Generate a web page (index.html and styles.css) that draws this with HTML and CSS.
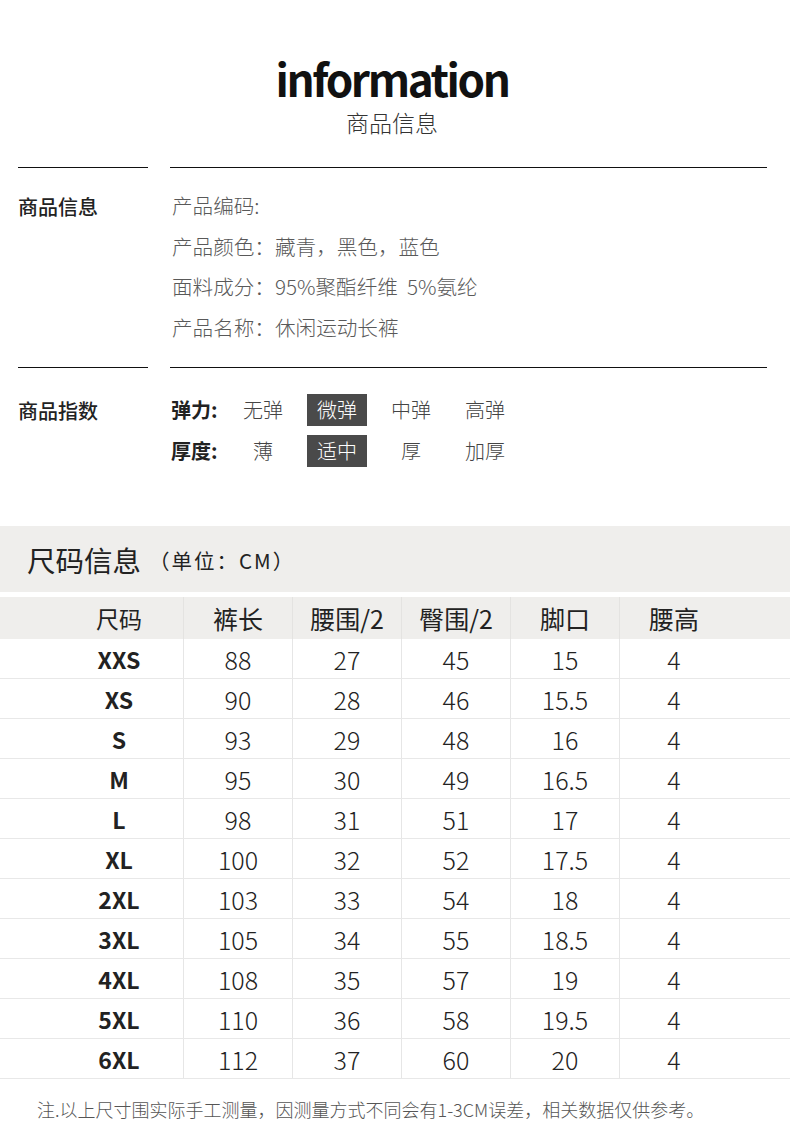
FILE: index.html
```html
<!DOCTYPE html>
<html lang="zh-CN">
<head>
<meta charset="utf-8">
<title>information 商品信息</title>
<link rel="stylesheet" href="styles.css">
</head>
<body>
<div class="page">
  <header class="head">
    <div class="title">information</div>
    <div class="subtitle">商品信息</div>
  </header>

  <section class="info">
    <div class="info-label">商品信息</div>
    <div class="info-body">
      <div class="info-row">产品编码:</div>
      <div class="info-row">产品颜色：藏青，黑色，蓝色</div>
      <div class="info-row">面料成分：95%聚酯纤维&nbsp;&nbsp;5%氨纶</div>
      <div class="info-row">产品名称：休闲运动长裤</div>
    </div>
  </section>

  <section class="info info-index">
    <div class="info-label">商品指数</div>
    <div class="info-body">
      <div class="idx-row">
        <span class="idx-name">弹力:</span>
        <span class="opt">无弹</span>
        <span class="opt"><span class="on">微弹</span></span>
        <span class="opt">中弹</span>
        <span class="opt">高弹</span>
      </div>
      <div class="idx-row">
        <span class="idx-name">厚度:</span>
        <span class="opt">薄</span>
        <span class="opt"><span class="on">适中</span></span>
        <span class="opt">厚</span>
        <span class="opt">加厚</span>
      </div>
    </div>
  </section>

  <div class="size-band">
    <span class="size-title">尺码信息</span><span class="size-unit">（单位：CM）</span>
  </div>

  <div class="table">
    <div class="tr th">
      <div class="c c1">尺码</div><div class="c">裤长</div><div class="c">腰围/2</div><div class="c">臀围/2</div><div class="c">脚口</div><div class="c clast">腰高</div>
    </div>
    <div class="tr"><div class="c c1">XXS</div><div class="c">88</div><div class="c">27</div><div class="c">45</div><div class="c">15</div><div class="c clast">4</div></div>
    <div class="tr"><div class="c c1">XS</div><div class="c">90</div><div class="c">28</div><div class="c">46</div><div class="c">15.5</div><div class="c clast">4</div></div>
    <div class="tr"><div class="c c1">S</div><div class="c">93</div><div class="c">29</div><div class="c">48</div><div class="c">16</div><div class="c clast">4</div></div>
    <div class="tr"><div class="c c1">M</div><div class="c">95</div><div class="c">30</div><div class="c">49</div><div class="c">16.5</div><div class="c clast">4</div></div>
    <div class="tr"><div class="c c1">L</div><div class="c">98</div><div class="c">31</div><div class="c">51</div><div class="c">17</div><div class="c clast">4</div></div>
    <div class="tr"><div class="c c1">XL</div><div class="c">100</div><div class="c">32</div><div class="c">52</div><div class="c">17.5</div><div class="c clast">4</div></div>
    <div class="tr"><div class="c c1">2XL</div><div class="c">103</div><div class="c">33</div><div class="c">54</div><div class="c">18</div><div class="c clast">4</div></div>
    <div class="tr"><div class="c c1">3XL</div><div class="c">105</div><div class="c">34</div><div class="c">55</div><div class="c">18.5</div><div class="c clast">4</div></div>
    <div class="tr"><div class="c c1">4XL</div><div class="c">108</div><div class="c">35</div><div class="c">57</div><div class="c">19</div><div class="c clast">4</div></div>
    <div class="tr"><div class="c c1">5XL</div><div class="c">110</div><div class="c">36</div><div class="c">58</div><div class="c">19.5</div><div class="c clast">4</div></div>
    <div class="tr"><div class="c c1">6XL</div><div class="c">112</div><div class="c">37</div><div class="c">60</div><div class="c">20</div><div class="c clast">4</div></div>
  </div>

  <p class="note">注.以上尺寸围实际手工测量，因测量方式不同会有1-3CM误差，相关数据仅供参考。</p>
</div>
</body>
</html>
```

FILE: styles.css
```css
* { box-sizing: border-box; }
html, body { margin: 0; padding: 0; background: #fff; }
body {
  font-family: "Noto Sans CJK SC", "Noto Sans", sans-serif;
  color: #222;
}
.page { width: 790px; }

.head {
  padding-top: 56px;
  height: 167px;
  text-align: center;
  padding-right: 6px;
}
.title {
  font-size: 44px;
  line-height: 44px;
  font-weight: 700;
  color: #111;
  letter-spacing: -2.4px;
}
.subtitle {
  margin-top: 9px;
  font-size: 23px;
  line-height: 26px;
  font-weight: 300;
  color: #333;
}

.info {
  display: grid;
  grid-template-columns: 130px 597px;
  column-gap: 22px;
  margin-left: 18px;
}
.info-label, .info-body { border-top: 1px solid #111; }
.info-label {
  padding-top: 25px;
  font-size: 20px;
  line-height: 28px;
  font-weight: 500;
  color: #222;
}
.info-body {
  padding: 17px 0 20px 2px;
}
.info-row {
  font-size: 20.6px;
  line-height: 40.5px;
  font-weight: 300;
  color: #595959;
}

.info-index { height: 159px; }
.info-index .info-label { padding-top: 29px; }
.info-index .info-body { padding: 21px 0 0 1px; }
.idx-row {
  display: flex;
  align-items: center;
  height: 41px;
}
.idx-name {
  width: 55px;
  font-size: 20px;
  font-weight: 700;
  color: #222;
}
.opt {
  width: 74px;
  text-align: center;
  font-size: 20px;
  font-weight: 300;
  color: #444;
}
.on {
  display: inline-block;
  width: 60px;
  height: 32px;
  line-height: 32px;
  background: #4a4a4a;
  color: #fff;
}

.size-band {
  height: 66px;
  background: #efeeec;
  padding-left: 27px;
  display: flex;
  align-items: center;
  margin-bottom: 5px;
}
.size-title {
  font-size: 28.5px;
  font-weight: 400;
  color: #222;
}
.size-unit {
  font-size: 20.5px;
  letter-spacing: 2px;
  color: #222;
  margin-left: 8px;
  padding-top: 2px;
}

.table { width: 790px; }
.tr {
  display: flex;
  height: 40px;
  border-bottom: 1px solid #e8e8e8;
}
.tr.th {
  height: 42px;
  background: #efeeec;
  border-bottom: none;
}
.c {
  width: 109px;
  border-left: 1px solid #e6e6e6;
  display: flex;
  align-items: center;
  justify-content: center;
  font-size: 25px;
  font-weight: 300;
  color: #222;
}
.th .c { font-weight: 400; border-left-color: #e4e3e1; }
.c1 {
  width: 183px;
  padding-left: 55px;
  border-left: none;
  font-weight: 700;
  font-size: 23px;
}
.clast {
  flex: 1;
  padding-right: 62px;
}

.note {
  margin: 18px 0 0 37px;
  font-size: 18px;
  line-height: 24px;
  font-weight: 300;
  color: #555;
}
```
